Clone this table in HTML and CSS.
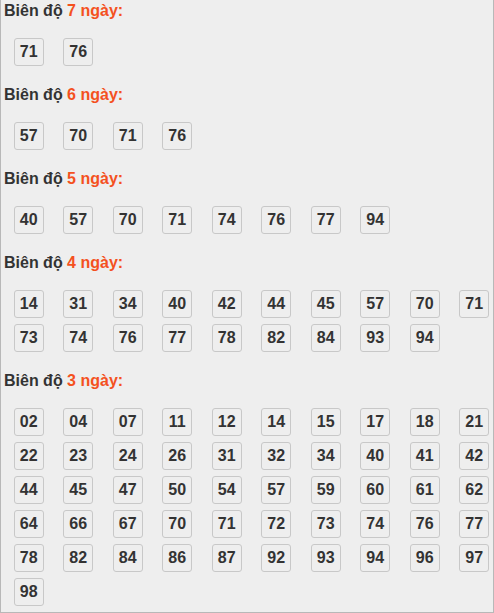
FILE: index.html
```html
<!DOCTYPE html>
<html lang="vi">
<head>
<meta charset="utf-8">
<title>Biên độ</title>
<link rel="stylesheet" href="styles.css">
</head>
<body>
<div class="panel">
  <section class="group">
    <div class="title">Biên độ <span class="hl">7 ngày:</span></div>
    <div class="nums"><span class="n">71</span><span class="n">76</span></div>
  </section>
  <section class="group">
    <div class="title">Biên độ <span class="hl">6 ngày:</span></div>
    <div class="nums"><span class="n">57</span><span class="n">70</span><span class="n">71</span><span class="n">76</span></div>
  </section>
  <section class="group">
    <div class="title">Biên độ <span class="hl">5 ngày:</span></div>
    <div class="nums"><span class="n">40</span><span class="n">57</span><span class="n">70</span><span class="n">71</span><span class="n">74</span><span class="n">76</span><span class="n">77</span><span class="n">94</span></div>
  </section>
  <section class="group">
    <div class="title">Biên độ <span class="hl">4 ngày:</span></div>
    <div class="nums"><span class="n">14</span><span class="n">31</span><span class="n">34</span><span class="n">40</span><span class="n">42</span><span class="n">44</span><span class="n">45</span><span class="n">57</span><span class="n">70</span><span class="n">71</span><span class="n">73</span><span class="n">74</span><span class="n">76</span><span class="n">77</span><span class="n">78</span><span class="n">82</span><span class="n">84</span><span class="n">93</span><span class="n">94</span></div>
  </section>
  <section class="group">
    <div class="title">Biên độ <span class="hl">3 ngày:</span></div>
    <div class="nums"><span class="n">02</span><span class="n">04</span><span class="n">07</span><span class="n">11</span><span class="n">12</span><span class="n">14</span><span class="n">15</span><span class="n">17</span><span class="n">18</span><span class="n">21</span><span class="n">22</span><span class="n">23</span><span class="n">24</span><span class="n">26</span><span class="n">31</span><span class="n">32</span><span class="n">34</span><span class="n">40</span><span class="n">41</span><span class="n">42</span><span class="n">44</span><span class="n">45</span><span class="n">47</span><span class="n">50</span><span class="n">54</span><span class="n">57</span><span class="n">59</span><span class="n">60</span><span class="n">61</span><span class="n">62</span><span class="n">64</span><span class="n">66</span><span class="n">67</span><span class="n">70</span><span class="n">71</span><span class="n">72</span><span class="n">73</span><span class="n">74</span><span class="n">76</span><span class="n">77</span><span class="n">78</span><span class="n">82</span><span class="n">84</span><span class="n">86</span><span class="n">87</span><span class="n">92</span><span class="n">93</span><span class="n">94</span><span class="n">96</span><span class="n">97</span><span class="n">98</span></div>
  </section>
</div>
</body>
</html>
```

FILE: styles.css
```css
html, body {
  margin: 0;
  padding: 0;
  background: #eeeeee;
}
.panel {
  box-sizing: border-box;
  width: 494px;
  height: 613px;
  overflow: hidden;
  padding-top: 1px;
  background: #eeeeee;
  border-left: 1px solid #b8b8b8;
  border-right: 1px solid #b8b8b8;
  border-bottom: 1px solid #b8b8b8;
  font-family: "Liberation Sans", Arial, sans-serif;
  color: #333333;
}
.title {
  height: 20px;
  line-height: 20px;
  padding-left: 3px;
  font-size: 16px;
  font-weight: bold;
  white-space: nowrap;
}
.hl {
  color: #f4511e;
}
.nums {
  display: grid;
  grid-template-columns: repeat(10, 30px);
  column-gap: 19.5px;
  row-gap: 6px;
  padding: 17px 0 19px 12.75px;
}
.n {
  box-sizing: border-box;
  width: 30px;
  height: 28px;
  line-height: 26px;
  border: 1px solid #c8c8c8;
  border-radius: 3px;
  text-align: center;
  font-size: 16px;
  font-weight: bold;
  color: #333333;
}
```
